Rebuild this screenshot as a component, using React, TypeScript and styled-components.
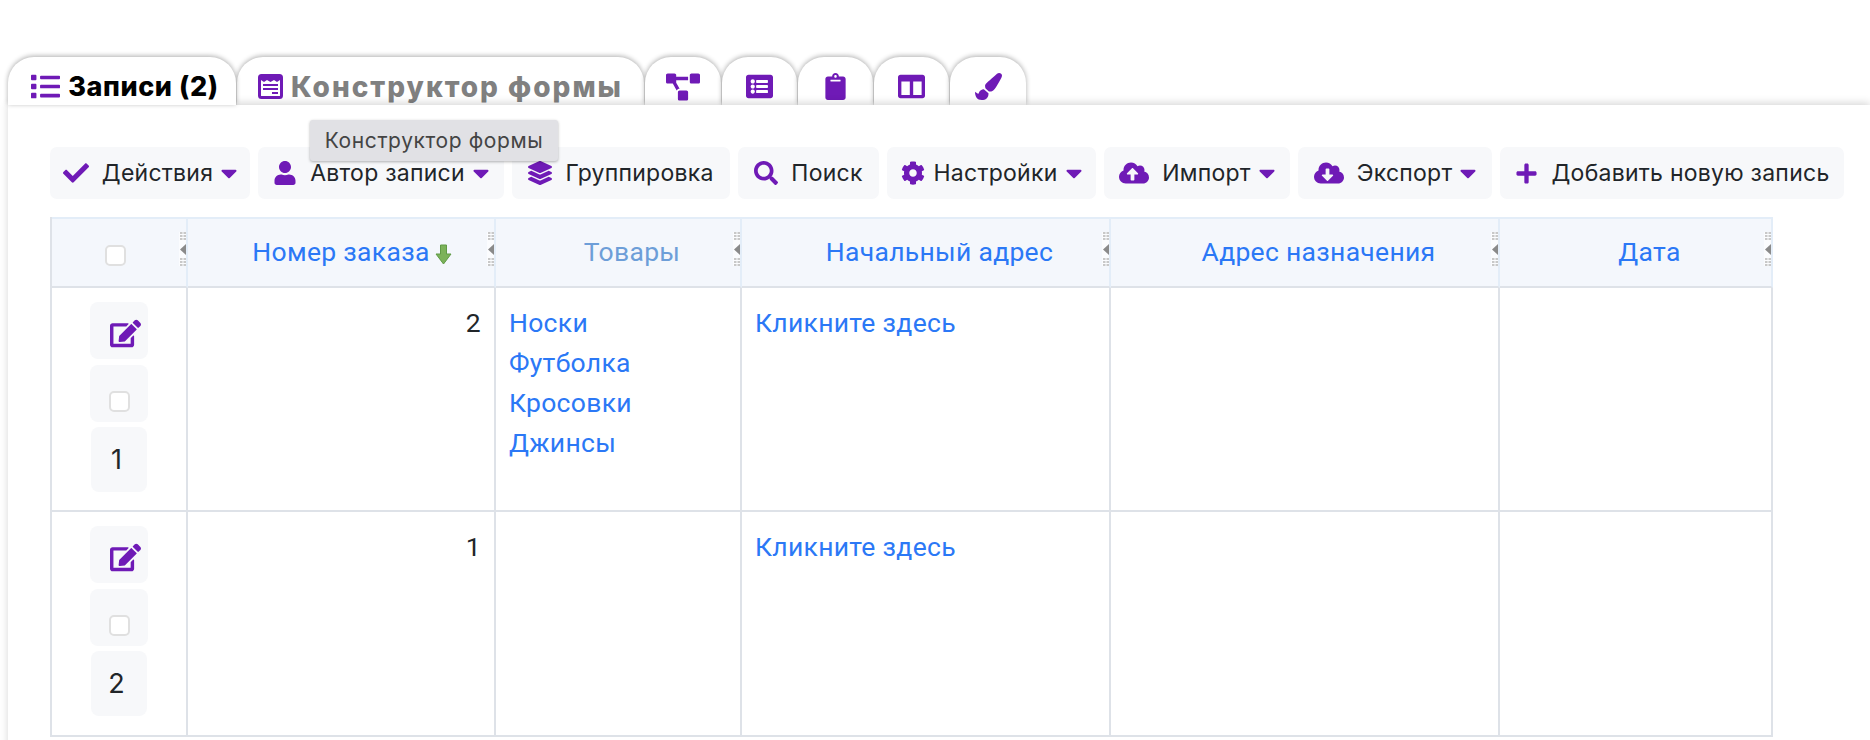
import { FC, ReactNode } from 'react';
import { styled, createGlobalStyle } from 'styled-components';
import {
  FaCheck,
  FaUser,
  FaLayerGroup,
  FaSearch,
  FaCog,
  FaCloudUploadAlt,
  FaCloudDownloadAlt,
  FaPlus,
  FaList,
  FaProjectDiagram,
  FaListAlt,
  FaClipboard,
  FaColumns,
  FaPaintBrush,
  FaEdit,
  FaCaretDown,
} from 'react-icons/fa';

const purple = '#6f1ab6';

const GlobalStyle = createGlobalStyle`
  html, body {
    margin: 0;
    padding: 0;
    background: #fff;
    font-family: Roboto, "Liberation Sans", sans-serif;
  }
`;

const Page = styled.div`
  position: relative;
  width: 1870px;
  height: 740px;
  overflow: hidden;
  padding: 57px 0 0 8px;
  box-sizing: border-box;
`;

const TabBar = styled.div`
  display: flex;
  height: 48px;
  gap: 1px;
`;

const Tab = styled.div<{ $w: number; $active?: boolean }>`
  position: relative;
  z-index: ${(p) => (p.$active ? 2 : 0)};
  display: flex;
  align-items: center;
  justify-content: center;
  gap: 8px;
  width: ${(p) => p.$w}px;
  height: 48px;
  box-sizing: border-box;
  padding-top: 11px;
  padding-left: ${(p) => (p.$active ? 6 : 0)}px;
  background: #fff;
  border-radius: 26px 26px 0 0;
  box-shadow: 0 -1px 5px rgba(0, 0, 0, 0.32);
  color: ${(p) => (p.$active ? '#000' : '#808080')};
  font-family: Inter, sans-serif;
  font-weight: 800;
  font-size: ${(p) => (p.$active ? 27 : 28)}px;
  letter-spacing: ${(p) => (p.$active ? 0.6 : 2)}px;
  white-space: nowrap;
  svg {
    color: ${purple};
    flex: none;
  }
`;

const Content = styled.div`
  position: relative;
  z-index: 1;
  height: 640px;
  padding: 42px 0 0 42px;
  background: #fff;
  box-shadow: 0 -2px 8px rgba(0, 0, 0, 0.16);
`;

const Toolbar = styled.div`
  display: flex;
  gap: 8px;
  height: 52px;
`;

const ToolButton = styled.div<{ $w: number; $gap?: number }>`
  display: flex;
  align-items: center;
  justify-content: center;
  gap: ${(p) => p.$gap ?? 13}px;
  width: ${(p) => p.$w}px;
  box-sizing: border-box;
  background: #f7f8fa;
  border-radius: 7px;
  color: #212529;
  font-family: Inter, sans-serif;
  font-size: 23px;
  letter-spacing: 0.25px;
  white-space: nowrap;
  svg {
    color: ${purple};
    flex: none;
  }
`;

const Caret = styled(FaCaretDown)<{ $ml?: number }>`
  && {
    margin: 0 -5px 0 ${(p) => p.$ml ?? -10}px;
  }
`;

const Tooltip = styled.div`
  position: absolute;
  left: 310px;
  top: 120px;
  z-index: 5;
  width: 248px;
  height: 41px;
  display: flex;
  align-items: center;
  justify-content: center;
  box-sizing: border-box;
  background: #e1e1e5;
  border-radius: 3px;
  box-shadow: 0 1px 3px rgba(0, 0, 0, 0.3);
  color: #444;
  font-family: Inter, sans-serif;
  font-size: 21px;
  letter-spacing: 0.6px;
`;

const Table = styled.div`
  display: grid;
  grid-template-columns: 136px 308px 246px 369px 389px 273px;
  width: max-content;
  margin-top: 18px;
  border-left: 2px solid #dee2e8;
`;

const HeadCell = styled.div<{ $muted?: boolean; $plain?: boolean }>`
  position: relative;
  height: 71px;
  box-sizing: border-box;
  display: flex;
  align-items: center;
  justify-content: center;
  gap: 5px;
  padding-bottom: 2px;
  padding-left: ${(p) => (p.$plain ? 0 : 28)}px;
  background: #f4f7fc;
  border-top: 2px solid #e3edf8;
  border-right: 2px solid #e3edf8;
  border-bottom: 2px solid #dee2e8;
  color: ${(p) => (p.$muted ? '#6d9ed8' : '#2b78f6')};
  font-size: 26.5px;
  letter-spacing: 0.3px;
`;

const Handle = styled.div`
  position: absolute;
  right: 0;
  top: 13px;
  width: 7px;
  height: 34px;
  display: flex;
  flex-direction: column;
  align-items: center;
  justify-content: space-between;
  background: #fbfcfe;
`;

const Grip = styled.svg`
  display: block;
`;

const Cell = styled.div<{ $h: number; $right?: boolean }>`
  height: ${(p) => p.$h}px;
  box-sizing: border-box;
  padding: 15px 13px 0 13px;
  border-right: 2px solid #dee2e8;
  border-bottom: 2px solid #dee2e8;
  text-align: ${(p) => (p.$right ? 'right' : 'left')};
  color: #212529;
  font-size: 26.5px;
  letter-spacing: 0.3px;
  line-height: 40px;
`;

const ControlCell = styled.div<{ $h: number }>`
  height: ${(p) => p.$h}px;
  box-sizing: border-box;
  padding-top: 14px;
  border-right: 2px solid #dee2e8;
  border-bottom: 2px solid #dee2e8;
  display: flex;
  flex-direction: column;
  align-items: center;
  gap: 5.5px;
`;

const EditTile = styled.div`
  width: 58px;
  height: 57px;
  box-sizing: border-box;
  padding: 6px 0 0 13px;
  display: flex;
  align-items: center;
  justify-content: center;
  background: #f7f8fa;
  border-radius: 8px;
  svg {
    color: ${purple};
  }
`;

const CheckTile = styled.div`
  width: 58px;
  height: 57px;
  box-sizing: border-box;
  padding-top: 16px;
  display: flex;
  align-items: center;
  justify-content: center;
  background: #f7f8fa;
  border-radius: 8px;
`;

const NumberTile = styled.div`
  width: 56px;
  height: 65px;
  box-sizing: border-box;
  padding-right: 5px;
  display: flex;
  align-items: center;
  justify-content: center;
  background: #f7f8fa;
  border-radius: 8px;
  color: #212529;
  font-family: Inter, sans-serif;
  font-size: 27px;
`;

const Check = styled.span`
  display: block;
  width: 21px;
  height: 21px;
  box-sizing: border-box;
  background: #fff;
  border: 2px solid #e0e0e0;
  border-radius: 5px;
`;

const HeadCheck = styled(Check)`
  margin-top: 8px;
  margin-right: 8px;
`;

const LinkLine = styled.div`
  color: #2b78f6;
`;

const SortIcon = styled.svg`
  margin-top: 6px;
  margin-right: 6px;
  flex: none;
`;

const TabForm: FC = () => (
  <svg width="25" height="25" viewBox="0 0 25 25" fill="none">
    <rect x="1.5" y="1.5" width="22" height="22" rx="2" stroke={purple} strokeWidth="3" />
    <path d="M3 3h19v3l-3 2-3-2-3.5 2-3.5-2-3 2-3-2z" fill={purple} />
    <path d="M5 11h15M5 15h15M14 19h6" stroke={purple} strokeWidth="2" />
  </svg>
);

const SortArrow: FC = () => (
  <SortIcon width="17" height="21" viewBox="0 0 17 21">
    <path d="M5.5 1h6v9h4.5l-7.5 10-7.5-10h4.500z" fill="#7cb25a" stroke="#5f9a45" strokeWidth="1" />
  </SortIcon>
);

const GripDots: FC = () => (
  <Grip width="6" height="8" viewBox="0 0 6 8" fill="#c8c8c8">
    <rect x="0" y="0" width="2.500" height="2" />
    <rect x="3.500" y="0" width="2.500" height="2" />
    <rect x="0" y="3" width="2.500" height="2" />
    <rect x="3.500" y="3" width="2.500" height="2" />
    <rect x="0" y="6" width="2.500" height="2" />
    <rect x="3.500" y="6" width="2.500" height="2" />
  </Grip>
);

const ResizeHandle: FC = () => (
  <Handle>
    <GripDots />
    <Grip width="6" height="11" viewBox="0 0 6 11" fill="#8a8a8a">
      <path d="M6 0v11L0 5.500z" />
    </Grip>
    <GripDots />
  </Handle>
);

const Head: FC<{ children?: ReactNode; muted?: boolean; plain?: boolean }> = ({ children, muted, plain }) => (
  <HeadCell $muted={muted} $plain={plain}>
    {children}
    <ResizeHandle />
  </HeadCell>
);

const Controls: FC<{ h: number; n: number }> = ({ h, n }) => (
  <ControlCell $h={h}>
    <EditTile>
      <FaEdit size={31} />
    </EditTile>
    <CheckTile>
      <Check />
    </CheckTile>
    <NumberTile>{n}</NumberTile>
  </ControlCell>
);

const App: FC = () => (
  <Page>
    <GlobalStyle />
    <TabBar>
      <Tab $w={228} $active>
        <FaList size={29} />
        Записи (2)
      </Tab>
      <Tab $w={407}>
        <TabForm />
        Конструктор формы
      </Tab>
      <Tab $w={76}>
        <FaProjectDiagram size={34} />
      </Tab>
      <Tab $w={75}>
        <FaListAlt size={27} />
      </Tab>
      <Tab $w={75}>
        <FaClipboard size={27} />
      </Tab>
      <Tab $w={75}>
        <FaColumns size={27} />
      </Tab>
      <Tab $w={76}>
        <FaPaintBrush size={27} />
      </Tab>
    </TabBar>
    <Content>
      <Toolbar>
        <ToolButton $w={200}>
          <FaCheck size={26} />
          Действия
          <Caret size={26} />
        </ToolButton>
        <ToolButton $w={246}>
          <FaUser size={24} />
          Автор записи
          <Caret size={26} />
        </ToolButton>
        <ToolButton $w={218}>
          <FaLayerGroup size={24} />
          Группировка
        </ToolButton>
        <ToolButton $w={141}>
          <FaSearch size={24} />
          Поиск
        </ToolButton>
        <ToolButton $w={209} $gap={8}>
          <FaCog size={24} />
          Настройки
          <Caret size={26} $ml={-5} />
        </ToolButton>
        <ToolButton $w={186}>
          <FaCloudUploadAlt size={30} />
          Импорт
          <Caret size={26} />
        </ToolButton>
        <ToolButton $w={194}>
          <FaCloudDownloadAlt size={30} />
          Экспорт
          <Caret size={26} />
        </ToolButton>
        <ToolButton $w={344} $gap={14}>
          <FaPlus size={23} />
          Добавить новую запись
        </ToolButton>
      </Toolbar>
      <Table>
        <Head plain>
          <HeadCheck />
        </Head>
        <Head>
          Номер заказа
          <SortArrow />
        </Head>
        <Head muted>Товары</Head>
        <Head>Начальный адрес</Head>
        <Head>Адрес назначения</Head>
        <Head>Дата</Head>

        <Controls h={224} n={1} />
        <Cell $h={224} $right>
          2
        </Cell>
        <Cell $h={224}>
          <LinkLine>Носки</LinkLine>
          <LinkLine>Футболка</LinkLine>
          <LinkLine>Кросовки</LinkLine>
          <LinkLine>Джинсы</LinkLine>
        </Cell>
        <Cell $h={224}>
          <LinkLine>Кликните здесь</LinkLine>
        </Cell>
        <Cell $h={224} />
        <Cell $h={224} />

        <Controls h={225} n={2} />
        <Cell $h={225} $right>
          1
        </Cell>
        <Cell $h={225} />
        <Cell $h={225}>
          <LinkLine>Кликните здесь</LinkLine>
        </Cell>
        <Cell $h={225} />
        <Cell $h={225} />
      </Table>
    </Content>
    <Tooltip>Конструктор формы</Tooltip>
  </Page>
);

export default App;
